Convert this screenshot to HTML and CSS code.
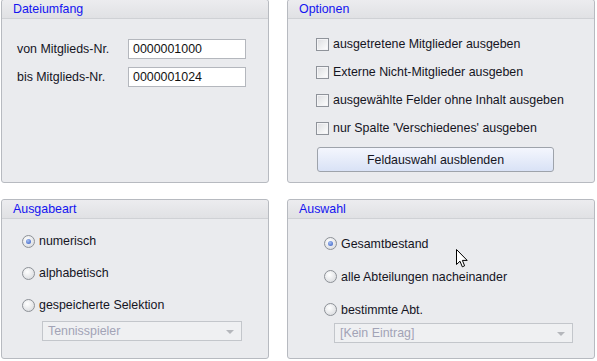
FILE: index.html
```html
<!DOCTYPE html>
<html lang="de">

<head>
    <meta charset="UTF-8" />
    <title>Ausgabe</title>
    <link rel="stylesheet" href="styles.css">
</head>

<body>
    <div class="layout">
        <div class="panel">
            <div class="panel-head">Dateiumfang</div>
            <div class="panel-body range">
                <div class="field">
                    <label>von Mitglieds-Nr.</label>
                    <div class="input">0000001000</div>
                </div>
                <div class="field">
                    <label>bis Mitglieds-Nr.</label>
                    <div class="input">0000001024</div>
                </div>
            </div>
        </div>

        <div class="panel">
            <div class="panel-head">Optionen</div>
            <div class="panel-body options">
                <div class="check-row"><span class="check"></span>ausgetretene Mitglieder ausgeben</div>
                <div class="check-row"><span class="check"></span>Externe Nicht-Mitglieder ausgeben</div>
                <div class="check-row"><span class="check"></span>ausgewählte Felder ohne Inhalt ausgeben</div>
                <div class="check-row"><span class="check"></span>nur Spalte 'Verschiedenes' ausgeben</div>
                <button class="btn">Feldauswahl ausblenden</button>
            </div>
        </div>

        <div class="panel">
            <div class="panel-head">Ausgabeart</div>
            <div class="panel-body kind">
                <div class="radio-row"><span class="radio on"></span>numerisch</div>
                <div class="radio-row"><span class="radio"></span>alphabetisch</div>
                <div class="radio-row"><span class="radio"></span>gespeicherte Selektion</div>
                <div class="select">Tennisspieler<span class="caret"></span></div>
            </div>
        </div>

        <div class="panel">
            <div class="panel-head">Auswahl</div>
            <div class="panel-body choice">
                <div class="radio-row"><span class="radio on"></span>Gesamtbestand</div>
                <div class="radio-row"><span class="radio"></span>alle Abteilungen nacheinander</div>
                <div class="radio-row"><span class="radio"></span>bestimmte Abt.</div>
                <div class="select">[Kein Eintrag]<span class="caret"></span></div>
            </div>
            <!-- mouse pointer -->
            <svg class="cursor" width="13" height="20" viewBox="0 0 13 20">
                <path d="M0.5 0.5 L0.5 15.5 L4 12.2 L6.3 17.8 L8.6 16.8 L6.4 11.4 L11.2 11.4 Z" fill="#fff" stroke="#000" stroke-width="1" stroke-linejoin="miter" />
            </svg>
        </div>
    </div>
</body>

</html>
```

FILE: styles.css
```css
body {
    margin: 0;
    background-color: #ffffff;
    font-family: 'Liberation Sans', Arial, sans-serif;
    font-size: 12.4px;
    color: #15151f;
}

.layout {
    display: grid;
    grid-template-columns: 268px 308px;
    grid-template-rows: 184px 160px;
    column-gap: 18px;
    row-gap: 16px;
    margin: -1px 0 0 1px;
}

.panel {
    position: relative;
    display: flex;
    flex-direction: column;
    border: 1px solid #b7bac0;
    border-radius: 3px;
    background-color: #eaebee;
}

.panel-head {
    height: 18px;
    line-height: 18px;
    padding-left: 11px;
    color: #1414f0;
    font-size: 12.4px;
    background: linear-gradient(#ececef, #e0e1e4);
    border-bottom: 1px solid #cfd1d5;
    border-radius: 3px 3px 0 0;
}

.panel-body {
    flex: 1;
    display: flex;
    flex-direction: column;
}

/* Dateiumfang */
.range {
    padding: 20px 0 0 15px;
    gap: 8px;
}

.field {
    display: flex;
    align-items: center;
}

.field label {
    flex: 0 0 111px;
}

.input {
    width: 112px;
    height: 18px;
    line-height: 19px;
    padding-left: 4px;
    background-color: #ffffff;
    border: 1px solid #b4b7bd;
    color: #111;
}

/* Optionen */
.options {
    padding: 11px 0 0 28px;
}

.check-row {
    display: flex;
    align-items: center;
    height: 28px;
    gap: 4px;
}

.check {
    width: 11px;
    height: 11px;
    border: 1px solid #8f939a;
    background: linear-gradient(135deg, #dcdde0, #ffffff);
    box-shadow: inset 0 0 0 1px #f4f4f6;
}

.btn {
    width: 237px;
    height: 25px;
    margin: 5px 0 0 1px;
    padding: 0;
    font-family: inherit;
    font-size: 12.4px;
    color: #15151f;
    border: 1px solid #9ea3ab;
    border-radius: 3px;
    background: linear-gradient(#f4f6fd, #d9e2f6);
}

/* Radios */
.kind {
    padding: 6px 0 0 20px;
}

.choice {
    padding: 8px 0 0 36px;
}

.radio-row {
    display: flex;
    align-items: center;
    height: 32px;
    gap: 4px;
}

.choice .radio-row {
    height: 33px;
}

.radio {
    position: relative;
    width: 11px;
    height: 11px;
    border-radius: 50%;
    border: 1px solid #8d9197;
    background: radial-gradient(circle at 40% 35%, #ffffff, #d3d5d9);
}

.radio.on::after {
    content: '';
    position: absolute;
    left: 3px;
    top: 3px;
    width: 5px;
    height: 5px;
    border-radius: 50%;
    background: radial-gradient(circle at 40% 35%, #a9c2f2, #2d55c0);
}

.select {
    position: relative;
    height: 18px;
    line-height: 19px;
    padding-left: 5px;
    border: 1px solid #c3c6cb;
    background-color: #eff0f2;
    color: #a2a3b6;
}

.kind .select {
    width: 193px;
    margin: 0 0 0 20px;
}

.choice .select {
    width: 232px;
    margin: -3px 0 0 10px;
}

.caret {
    position: absolute;
    right: 7px;
    top: 8px;
    border-left: 4px solid transparent;
    border-right: 4px solid transparent;
    border-top: 4px solid #b5b7bc;
}

.cursor {
    position: absolute;
    left: 168px;
    top: 49px;
}
```
